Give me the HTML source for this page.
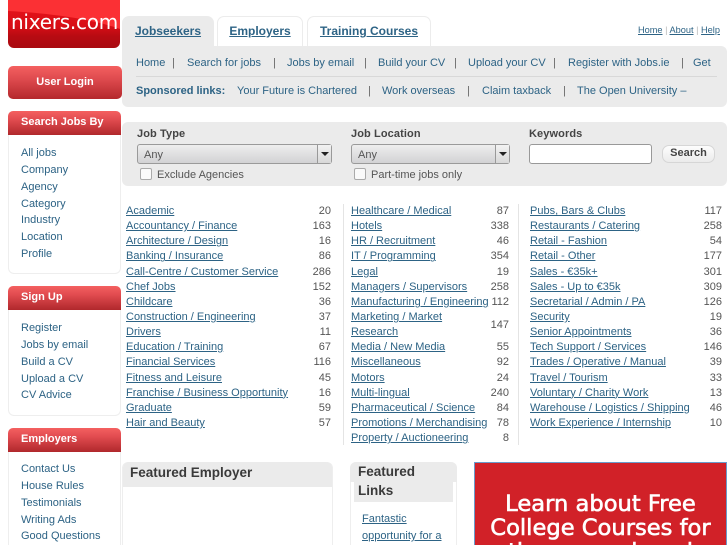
<!DOCTYPE html>
<html><head><meta charset="utf-8">
<style>
html,body{margin:0;padding:0;background:#fff;width:727px;height:545px;overflow:hidden;position:relative;font-family:"Liberation Sans",Arial,sans-serif;font-size:11px;color:#2d6385;letter-spacing:0}
*{box-sizing:border-box}
.a{position:absolute;white-space:nowrap}
a{color:#2d6385}
.logo{left:8px;top:0;width:112px;height:48px;border-radius:0 0 6px 6px;background:linear-gradient(#e8141c 0,#d80e16 26px,#b80b12 36px,#a90a10 48px);overflow:hidden}
.logotxt{left:11px;top:8px;font-size:20px;color:#fff;font-family:"DejaVu Sans",sans-serif;letter-spacing:-.25px;line-height:28px}
.tab{top:16px;height:31px;border-radius:7px 7px 0 0;border:1px solid #ececec;border-bottom:none;background:#fff;font-weight:bold;font-size:12px;text-align:center;line-height:28px;letter-spacing:0}
.tab a{color:#2d6385}
.red{background:linear-gradient(#f46060,#e24c50 35%,#b0282c);color:#fff;font-weight:bold;border-radius:5px 5px 0 0;letter-spacing:0}
.box{left:8px;width:113px;border:1px solid #eee;border-top:none;border-radius:0 0 6px 6px;background:#fff}
.side{left:21px;line-height:16.85px}
.grey{background:#ebebeb}
.sel{height:20px;border:1px solid #9a9a9a;border-radius:3px;background:linear-gradient(#eeeeee,#d2d2d4);color:#555;padding-left:6px;line-height:21px}
.sel i{position:absolute;right:0;top:0;width:14px;height:18px;border-left:1px solid #999;background:linear-gradient(#f2f2f2,#d8d8d8)}
.sel i:after{content:"";position:absolute;left:3px;top:7px;border:4px solid transparent;border-top:4px solid #222;border-bottom:none}
.cb{width:12px;height:12px;border:1px solid #aaa;border-radius:2px;background:#fafafa}
.lab{font-weight:bold;color:#444;letter-spacing:.1px}
.col{position:absolute;top:204px}
.r{height:15.15px;line-height:15px;position:relative;white-space:nowrap}
.r b{font-weight:normal;position:absolute;right:0;top:0;color:#555}
.sep{position:absolute;top:204px;width:1px;height:241px;background:#e4e4e4}
.n{top:56px;line-height:14px}
.s{top:84px;line-height:14px}
.p{color:#666}
</style></head><body>

<div class="a logo"><svg width="112" height="48" style="position:absolute;left:0;top:0"><path d="M0 11 C40 13 85 19 112 29 L112 0 L0 0Z" fill="#fb3034"/></svg></div>
<div class="a logotxt">nixers.com</div>

<div class="a tab" style="left:122px;width:92px;background:#ebebeb;border-color:#ebebeb;height:32px"><a href="#">Jobseekers</a></div>
<div class="a tab" style="left:217px;width:86px"><a href="#">Employers</a></div>
<div class="a tab" style="left:307px;width:124px"><a href="#">Training Courses</a></div>
<div class="a" style="left:638px;top:25px;font-size:9.2px;letter-spacing:0"><a href="#">Home</a> <span style="color:#bbb">|</span> <a href="#">About</a> <span style="color:#bbb">|</span> <a href="#">Help</a></div>

<div class="a grey" style="left:122px;top:46px;width:605px;height:61px;border-radius:0 6px 6px 6px"></div>
<div class="a" style="left:136px;top:76px;width:581px;height:1px;background:#d8d8d8"></div>
<div class="a n" style="left:136px">Home</div><div class="a n p" style="left:172px">|</div>
<div class="a n" style="left:187px">Search for jobs</div><div class="a n p" style="left:273px">|</div>
<div class="a n" style="left:287px">Jobs by email</div><div class="a n p" style="left:364px">|</div>
<div class="a n" style="left:378px">Build your CV</div><div class="a n p" style="left:454px">|</div>
<div class="a n" style="left:468px">Upload your CV</div><div class="a n p" style="left:553px">|</div>
<div class="a n" style="left:568px">Register with Jobs.ie</div><div class="a n p" style="left:681px">|</div>
<div class="a n" style="left:693px">Get</div>

<div class="a s" style="left:136px;font-weight:bold">Sponsored links:</div>
<div class="a s" style="left:237px">Your Future is Chartered</div><div class="a s p" style="left:368px">|</div>
<div class="a s" style="left:382px">Work overseas</div><div class="a s p" style="left:467px">|</div>
<div class="a s" style="left:482px">Claim taxback</div><div class="a s p" style="left:563px">|</div>
<div class="a s" style="left:577px">The Open University –</div>

<!-- sidebar -->
<div class="a red" style="left:8px;top:66px;width:114px;height:33px;border-radius:5px;text-align:center;line-height:32px;background:linear-gradient(#f46060,#de4a4e 40%,#b4282c)">User Login</div>

<div class="a box" style="top:135px;height:139px"></div>
<div class="a red" style="left:8px;top:111px;width:113px;height:24px;padding-left:13px;line-height:23px">Search Jobs By</div>
<div class="a side" style="top:145px">All jobs<br>Company<br>Agency<br>Category<br>Industry<br>Location<br>Profile</div>

<div class="a box" style="top:310px;height:106px"></div>
<div class="a red" style="left:8px;top:286px;width:113px;height:24px;padding-left:13px;line-height:23px">Sign Up</div>
<div class="a side" style="top:320px">Register<br>Jobs by email<br>Build a CV<br>Upload a CV<br>CV Advice</div>

<div class="a box" style="top:452px;height:110px"></div>
<div class="a red" style="left:8px;top:428px;width:113px;height:24px;padding-left:13px;line-height:22px">Employers</div>
<div class="a side" style="top:461px">Contact Us<br>House Rules<br>Testimonials<br>Writing Ads<br>Good Questions</div>

<!-- search -->
<div class="a grey" style="left:122px;top:122px;width:605px;height:64px;border-radius:6px"></div>
<div class="a lab" style="left:137px;top:127px;line-height:14px">Job Type</div>
<div class="a lab" style="left:351px;top:127px;line-height:14px">Job Location</div>
<div class="a lab" style="left:529px;top:127px;line-height:14px">Keywords</div>
<div class="a sel" style="left:137px;top:144px;width:195px">Any<i></i></div>
<div class="a sel" style="left:351px;top:144px;width:159px">Any<i></i></div>
<div class="a" style="left:529px;top:144px;width:123px;height:20px;border:1px solid #999;border-radius:3px;background:#fff"></div>
<div class="a" style="left:662px;top:145px;width:53px;height:18px;border:1px solid #d6d6d6;border-radius:7px;background:linear-gradient(#fdfdfd,#ebebeb);font-weight:bold;color:#444;text-align:center;line-height:14px;font-size:11px">Search</div>
<div class="a cb" style="left:140px;top:168px"></div>
<div class="a" style="left:157px;top:168px;line-height:14px;color:#555">Exclude Agencies</div>
<div class="a cb" style="left:354px;top:168px"></div>
<div class="a" style="left:371px;top:168px;line-height:14px;color:#555">Part-time jobs only</div>

<!-- lists -->
<div class="sep" style="left:343px"></div>
<div class="sep" style="left:518px"></div>

<div class="col" style="left:126px;width:205px">
<div class="r"><a href="#">Academic</a><b>20</b></div>
<div class="r"><a href="#">Accountancy / Finance</a><b>163</b></div>
<div class="r"><a href="#">Architecture / Design</a><b>16</b></div>
<div class="r"><a href="#">Banking / Insurance</a><b>86</b></div>
<div class="r"><a href="#">Call-Centre / Customer Service</a><b>286</b></div>
<div class="r"><a href="#">Chef Jobs</a><b>152</b></div>
<div class="r"><a href="#">Childcare</a><b>36</b></div>
<div class="r"><a href="#">Construction / Engineering</a><b>37</b></div>
<div class="r"><a href="#">Drivers</a><b>11</b></div>
<div class="r"><a href="#">Education / Training</a><b>67</b></div>
<div class="r"><a href="#">Financial Services</a><b>116</b></div>
<div class="r"><a href="#">Fitness and Leisure</a><b>45</b></div>
<div class="r"><a href="#">Franchise / Business Opportunity</a><b>16</b></div>
<div class="r"><a href="#">Graduate</a><b>59</b></div>
<div class="r"><a href="#">Hair and Beauty</a><b>57</b></div>
</div>

<div class="col" style="left:351px;width:158px">
<div class="r"><a href="#">Healthcare / Medical</a><b>87</b></div>
<div class="r"><a href="#">Hotels</a><b>338</b></div>
<div class="r"><a href="#">HR / Recruitment</a><b>46</b></div>
<div class="r"><a href="#">IT / Programming</a><b>354</b></div>
<div class="r"><a href="#">Legal</a><b>19</b></div>
<div class="r"><a href="#">Managers / Supervisors</a><b>258</b></div>
<div class="r"><a href="#">Manufacturing / Engineering</a><b>112</b></div>
<div class="r"><a href="#">Marketing / Market</a><b style="top:8px">147</b></div>
<div class="r"><a href="#">Research</a></div>
<div class="r"><a href="#">Media / New Media</a><b>55</b></div>
<div class="r"><a href="#">Miscellaneous</a><b>92</b></div>
<div class="r"><a href="#">Motors</a><b>24</b></div>
<div class="r"><a href="#">Multi-lingual</a><b>240</b></div>
<div class="r"><a href="#">Pharmaceutical / Science</a><b>84</b></div>
<div class="r"><a href="#">Promotions / Merchandising</a><b>78</b></div>
<div class="r"><a href="#">Property / Auctioneering</a><b>8</b></div>
</div>

<div class="col" style="left:530px;width:192px">
<div class="r"><a href="#">Pubs, Bars &amp; Clubs</a><b>117</b></div>
<div class="r"><a href="#">Restaurants / Catering</a><b>258</b></div>
<div class="r"><a href="#">Retail - Fashion</a><b>54</b></div>
<div class="r"><a href="#">Retail - Other</a><b>177</b></div>
<div class="r"><a href="#">Sales - €35k+</a><b>301</b></div>
<div class="r"><a href="#">Sales - Up to €35k</a><b>309</b></div>
<div class="r"><a href="#">Secretarial / Admin / PA</a><b>126</b></div>
<div class="r"><a href="#">Security</a><b>19</b></div>
<div class="r"><a href="#">Senior Appointments</a><b>36</b></div>
<div class="r"><a href="#">Tech Support / Services</a><b>146</b></div>
<div class="r"><a href="#">Trades / Operative / Manual</a><b>39</b></div>
<div class="r"><a href="#">Travel / Tourism</a><b>33</b></div>
<div class="r"><a href="#">Voluntary / Charity Work</a><b>13</b></div>
<div class="r"><a href="#">Warehouse / Logistics / Shipping</a><b>46</b></div>
<div class="r"><a href="#">Work Experience / Internship</a><b>10</b></div>
</div>

<!-- bottom -->
<div class="a" style="left:122px;top:462px;width:211px;height:90px;border:1px solid #eee;border-radius:6px 6px 0 0"></div>
<div class="a grey" style="left:123px;top:462px;width:209px;height:25px;border-radius:6px 6px 0 0;color:#3a3a3a;font-weight:bold;font-size:13.5px;line-height:22px;padding-left:7px">Featured Employer</div>

<div class="a" style="left:350px;top:462px;width:107px;height:90px;border:1px solid #eee;border-radius:6px 6px 0 0"></div>
<div class="a grey" style="left:350px;top:462px;width:107px;height:20px;border-radius:6px 6px 0 0"></div>
<div class="a grey" style="left:354px;top:482px;width:99px;height:20px"></div>
<div class="a" style="left:358px;top:462px;color:#3a3a3a;font-weight:bold;font-size:13.5px;line-height:19px">Featured<br>Links</div>
<div class="a" style="left:362px;top:511px;line-height:17px"><a href="#">Fantastic</a><br><a href="#">opportunity for a</a></div>

<div class="a" style="left:474px;top:462px;width:253px;height:90px;background:#d12128;border:1px solid #6a9bcb;color:#fff;font-family:'DejaVu Sans',sans-serif;font-size:22.6px;-webkit-text-stroke:.6px #fff;line-height:24px;text-align:center;padding-top:29px;letter-spacing:0;overflow:hidden">Learn about Free<br>College Courses for<br>the unemployed</div>

</body></html>
